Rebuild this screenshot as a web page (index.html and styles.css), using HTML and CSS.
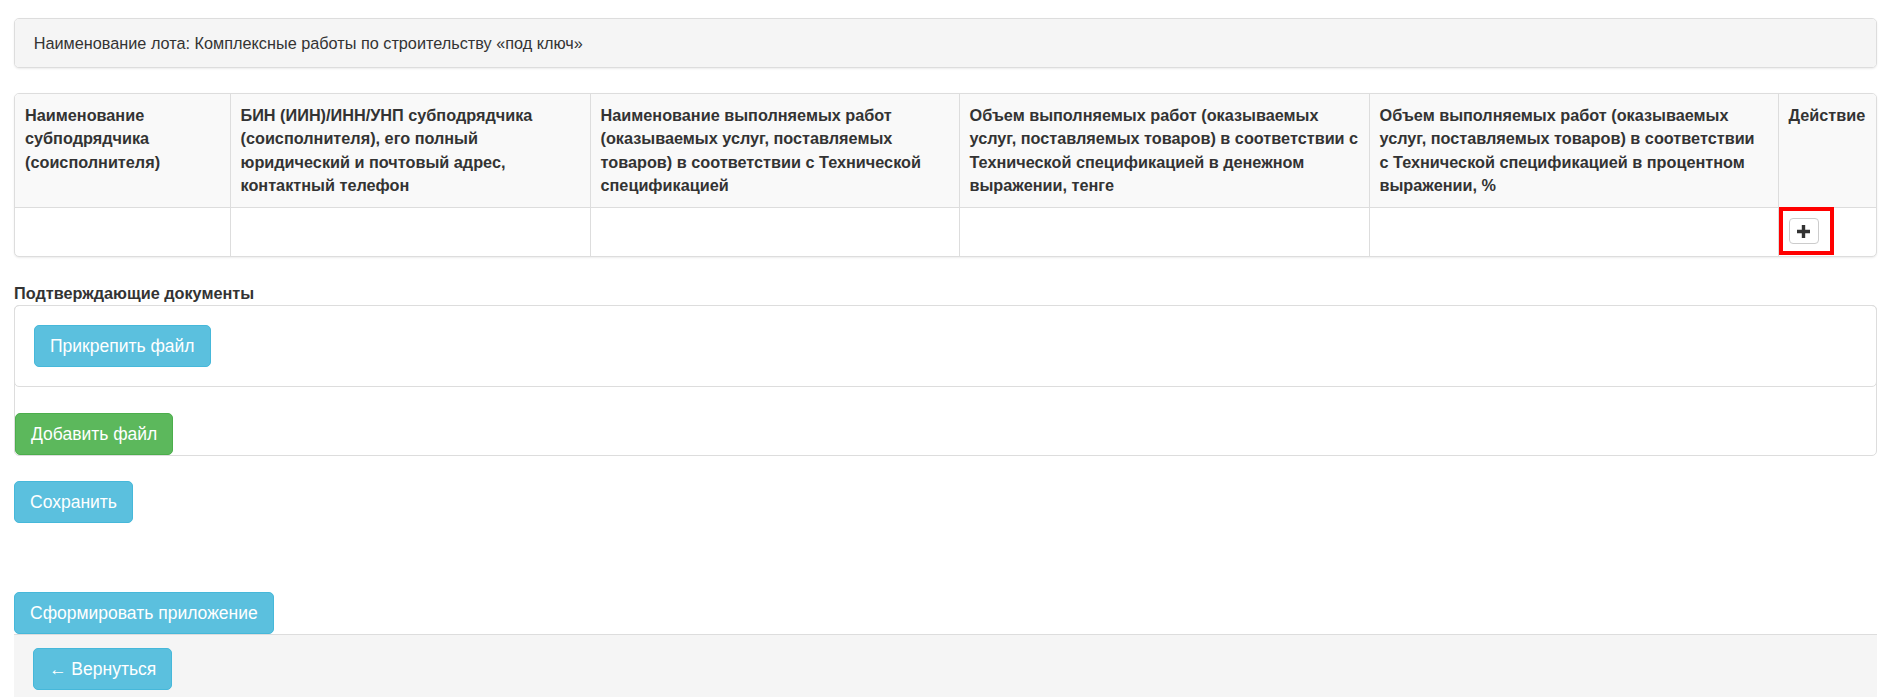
FILE: index.html
```html
<!DOCTYPE html>
<html lang="ru">

<head>
    <meta charset="UTF-8">
    <meta name="viewport" content="width=device-width, initial-scale=1.0">
    <title>Субподрядчики</title>
    <link rel="stylesheet" href="styles.css">
</head>

<body>
    <div class="container">
        <div class="panel lot-panel">
            <div class="panel-heading">Наименование лота: Комплексные работы по строительству «под ключ»</div>
        </div>

        <div class="panel table-panel">
            <table class="table">
                <thead>
                    <tr>
                        <th class="col-1">Наименование субподрядчика (соисполнителя)</th>
                        <th class="col-2">БИН (ИИН)/ИНН/УНП субподрядчика (соисполнителя), его полный юридический и почтовый адрес, контактный телефон</th>
                        <th class="col-3">Наименование выполняемых работ (оказываемых услуг, поставляемых товаров) в соответствии с Технической спецификацией</th>
                        <th class="col-4">Объем выполняемых работ (оказываемых услуг, поставляемых товаров) в соответствии с Технической спецификацией в денежном выражении, тенге</th>
                        <th class="col-5">Объем выполняемых работ (оказываемых услуг, поставляемых товаров) в соответствии с Технической спецификацией в процентном выражении, %</th>
                        <th class="col-6">Действие</th>
                    </tr>
                </thead>
                <tbody>
                    <tr>
                        <td></td>
                        <td></td>
                        <td></td>
                        <td></td>
                        <td></td>
                        <td class="action-cell">
                            <button class="btn btn-default btn-xs" title="Добавить">
                                <svg width="13" height="13" viewBox="0 0 13 13">
                                    <path d="M4.8 0h3.4v4.8H13v3.4H8.2V13H4.8V8.2H0V4.8h4.8z" fill="#333"/>
                                </svg>
                            </button>
                            <span class="mark"></span>
                        </td>
                    </tr>
                </tbody>
            </table>
        </div>

        <label class="docs-label">Подтверждающие документы</label>
        <div class="docs-box">
            <div class="docs-list">
                <button class="btn btn-info">Прикрепить файл</button>
            </div>
            <button class="btn btn-success">Добавить файл</button>
        </div>

        <div class="save-row">
            <button class="btn btn-info">Сохранить</button>
        </div>

        <div class="form-row">
            <button class="btn btn-info">Сформировать приложение</button>
        </div>

        <div class="footer">
            <button class="btn btn-info">&larr; Вернуться</button>
        </div>
    </div>
</body>

</html>
```

FILE: styles.css
```css
* {
    margin: 0;
    padding: 0;
    box-sizing: border-box;
}

body {
    font-family: "Liberation Sans", Arial, sans-serif;
    font-size: 16.25px;
    line-height: 1.42857;
    color: #333;
    background-color: #fff;
}

.container {
    padding: 18px 14px 0;
}

/* панели */
.panel {
    background-color: #fff;
    border: 1px solid #ddd;
    border-radius: 5px;
    box-shadow: 0 1px 2px rgba(0, 0, 0, .08);
    margin-bottom: 25px;
}

.lot-panel .panel-heading {
    background-color: #f5f5f5;
    padding: 12.5px 18.75px;
    border-radius: 4px;
}

.table-panel {
    overflow: hidden;
}

/* таблица */
.table {
    width: 100%;
    border-collapse: collapse;
    table-layout: fixed;
}

.table th,
.table td {
    padding: 10px;
    text-align: left;
    vertical-align: top;
    border-left: 1px solid #ddd;
}

.table th:first-child,
.table td:first-child {
    border-left: 0;
}

.table thead th {
    background-color: #f9f9f9;
    border-bottom: 1px solid #ddd;
    font-weight: bold;
}

.table td {
    height: 48px;
}

.table .col-1 { width: 215px; }
.table .col-2 { width: 360px; }
.table .col-3 { width: 369px; }
.table .col-4 { width: 410px; }
.table .col-5 { width: 409px; }

.action-cell {
    position: relative;
}

/* красная рамка-выделение */
.action-cell .mark {
    position: absolute;
    left: 0;
    top: -1px;
    width: 55px;
    height: 48px;
    border: 4px solid #ff0000;
}

/* кнопки */
.btn {
    display: inline-block;
    padding: 7.5px 15px;
    font-family: inherit;
    font-size: 17.5px;
    line-height: 25px;
    border: 1px solid transparent;
    border-radius: 5px;
    color: #fff;
    cursor: pointer;
}

.btn-info {
    background-color: #5bc0de;
    border-color: #46b8da;
}

.btn-success {
    background-color: #5cb85c;
    border-color: #4cae4c;
}

.btn-default {
    background-color: #fff;
    border-color: #ccc;
    color: #333;
}

.btn-xs {
    display: inline-flex;
    align-items: center;
    justify-content: center;
    width: 30px;
    height: 26px;
    padding: 0;
    border-radius: 4px;
}

/* документы */
.docs-label {
    display: block;
    font-weight: bold;
}

.docs-box {
    display: flex;
    flex-direction: column;
    align-items: flex-start;
    border: 1px solid #ddd;
    border-radius: 5px;
}

.docs-list {
    align-self: stretch;
    border: 1px solid #ddd;
    border-radius: 5px;
    margin: -1px -1px 26px;
    padding: 19.5px 19px 19px;
}

.save-row {
    margin: 25px 0 69px;
}

.footer {
    background-color: #f5f5f5;
    border-top: 1px solid #ddd;
    padding: 13px 19px;
}
```
